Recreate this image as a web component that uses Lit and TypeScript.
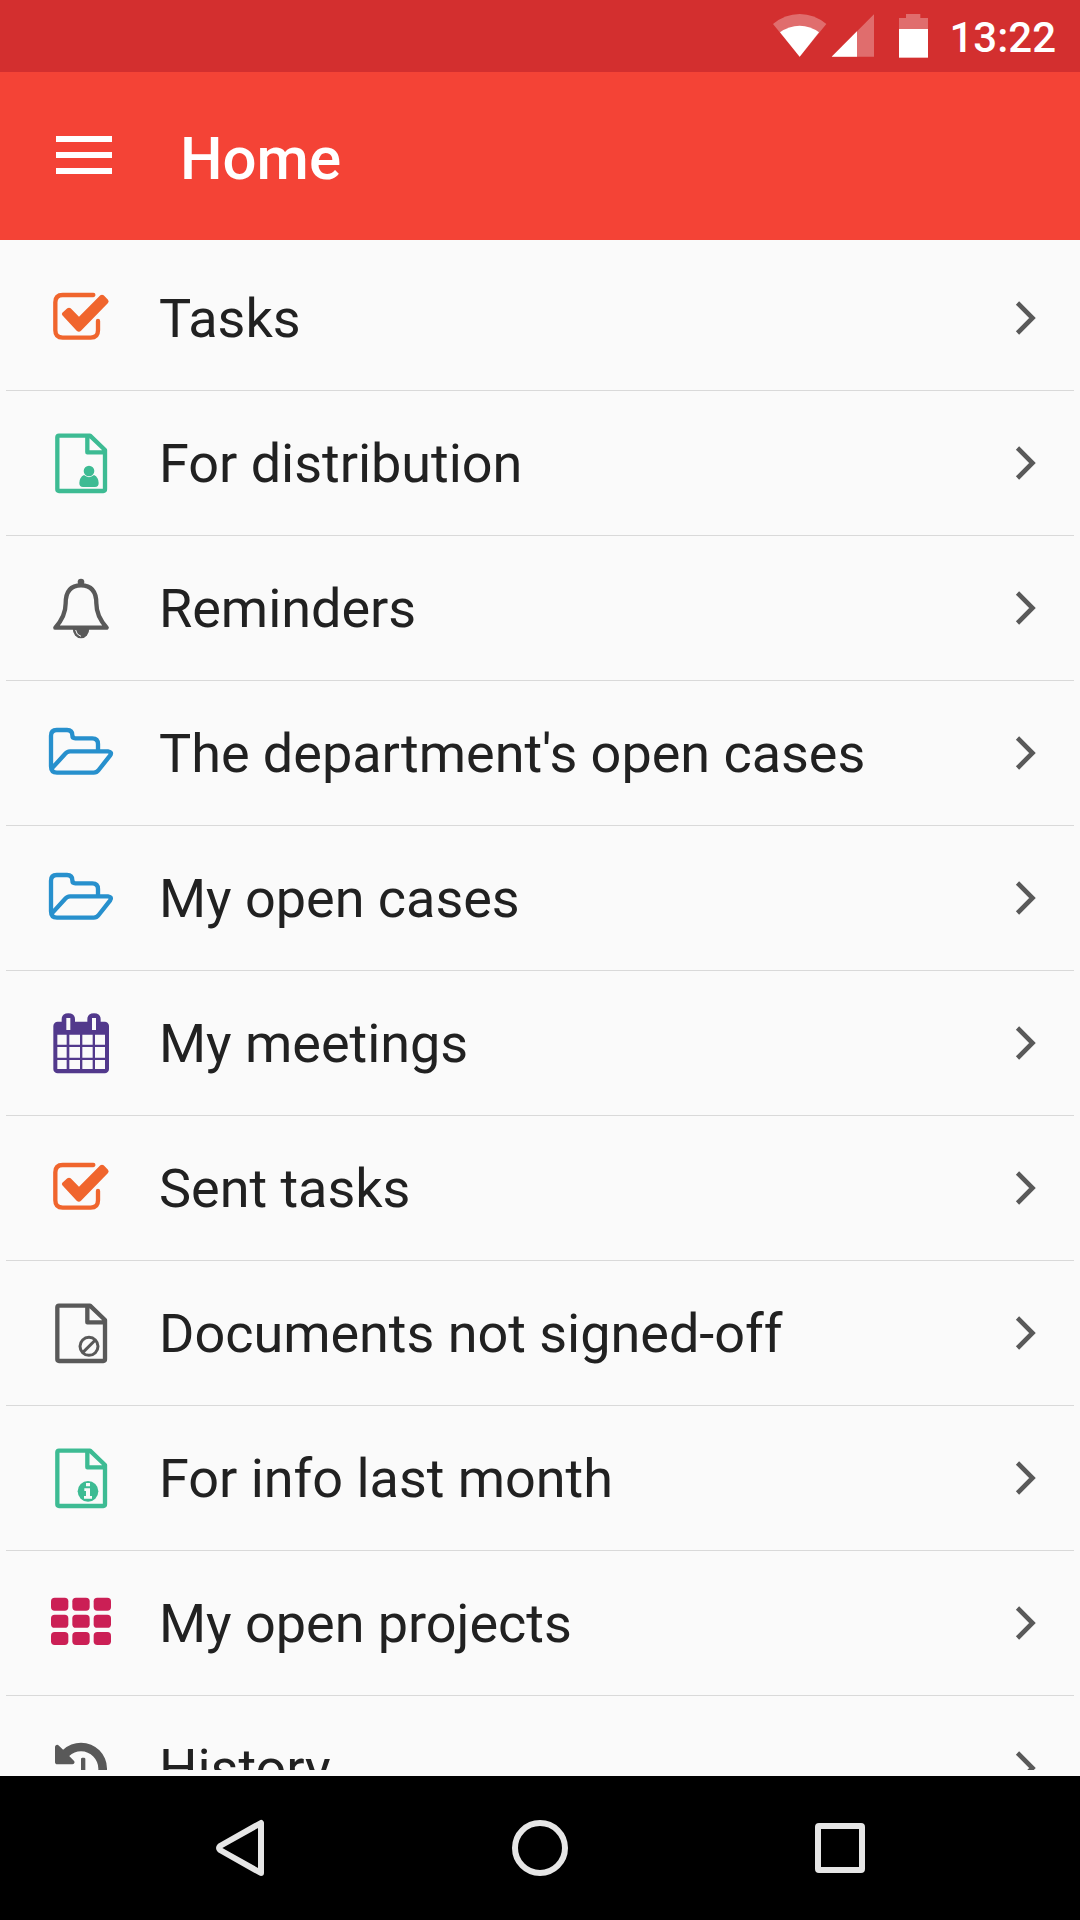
import { LitElement, html, svg, css } from "lit";
import { customElement, property } from "lit/decorators.js";

const ORANGE = "#f0652d";
const GREEN = "#3dbb93";
const GREY = "#595959";
const BLUE = "#2790cd";
const PURPLE = "#52398c";
const PINK = "#cb1f55";

const sheet = (color: string) => svg`
  <path d="M180 134H87q-5 0-5 5v156q0 5 5 5h133q5 0 5-5V177z M172 134v50h52"
    fill="none" stroke=${color} stroke-width="13" stroke-linejoin="round"/>`;

const check = svg`
  <path d="M190 147H98q-22 0-22 22v84q0 22 22 22h84q22 0 22-22v-28" fill="none"
    stroke=${ORANGE} stroke-width="13" stroke-linecap="round"/>
  <path d="M97 200q-3 4 0 8l43 46q7 6 13 0L234 171q4-5 0-10l-13-13q-5-4-10 0L147 212l-25-25q-5-4-10 0z"
    fill=${ORANGE}/>`;

const folder = svg`
  <g fill="none" stroke=${BLUE} stroke-width="13" stroke-linejoin="round">
    <path d="M204 208v-19q0-17-17-17h-51q-9 0-9-9 0-16-16-16H80q-17 0-17 17v92q0 19 18 19h110q9 0 15-8l34-43q8-11-6-13H120q-9 0-15 8L65 263"/>
  </g>`;

const icons: Record<string, unknown> = {
  check,
  folder,
  person: svg`${sheet(GREEN)}
    <circle cx="177" cy="240" r="16" fill=${GREEN}/>
    <path d="M162 252q15 13 30 0 14 7 14 24 0 12-11 12h-36q-11 0-11-12 0-17 14-24z" fill=${GREEN}/>`,
  bell: svg`
    <path d="M76 275q31-34 31-73 0-54 46-54t46 54q0 39 31 73z" fill="none" stroke=${GREY}
      stroke-width="13" stroke-linejoin="round"/>
    <circle cx="153" cy="138" r="10" fill=${GREY}/>
    <path d="M128 277a25 30 0 0 0 50 0z" fill=${GREY}/>
    <path d="M137 282q2 15 16 19" fill="none" stroke="#fafafa" stroke-width="3"/>`,
  calendar: svg`
    <rect x="70" y="152" width="167" height="155" rx="13" fill=${PURPLE}/>
    <path d="M95 160v-15q0-18 20-18t20 18v15zM172 160v-15q0-18 20-18t20 18v15z" fill=${PURPLE}/>
    <path d="M109 141h12v36h-12zM186 141h12v36h-12z" fill="#fafafa"/>
    <path d="M82 191h28v30H82zM118 191h32v30h-32zM157 191h31v30h-31zM195 191h30v30h-30z
      M82 228h28v32H82zM118 228h32v32h-32zM157 228h31v32h-31zM195 228h30v32h-30z
      M82 267h28v27H82zM118 267h32v27h-32zM157 267h31v27h-31zM195 267h30v27h-30z" fill="#fafafa"/>`,
  blocked: svg`${sheet(GREY)}
    <g fill="none" stroke=${GREY} stroke-width="9">
      <circle cx="177" cy="256" r="27"/><path d="M158 275l38-38"/>
    </g>`,
  info: svg`${sheet(GREEN)}
    <circle cx="174" cy="256" r="31" fill=${GREEN}/>
    <path d="M168 231h12v10h-12zM163 247h17v23h6v8h-24v-8h6v-15h-5z" fill="#fafafa"/>`,
  grid: svg`${[63, 127, 191].map((x) =>
    [140, 191.5, 243].map((y) => svg`<rect x=${x} y=${y} width="52" height="39" rx="11" fill=${PINK}/>`)
  )}`,
  history: svg`
    <path transform="translate(75 127) scale(.1016)" fill=${GREY}
      d="M1536 896q0 156-61 298t-164 245-245 164-298 61q-172 0-327-72.500t-264-204.500q-7-10-6.500-22.500t8.500-20.500l137-138q10-9 25-9 16 2 23 12 73 95 179 147t225 52q104 0 198.500-40.500t163.500-109.500 109.500-163.500 40.500-198.500-40.500-198.500-109.500-163.500-163.500-109.500-198.500-40.500q-98 0-188 35.500t-160 101.500l137 138q31 30 14 69-17 40-59 40h-448q-26 0-45-19t-19-45v-448q0-42 40-59 39-17 69 14l130 129q107-101 244.500-156.500t284.500-55.500q156 0 298 61t245 164 164 245 61 298zm-640-288v448q0 14-9 23t-23 9h-320q-14 0-23-9t-9-23v-64q0-14 9-23t23-9h224v-352q0-14 9-23t23-9h64q14 0 23 9t9 23z"/>`,
};

@customElement("menu-row")
class MenuRow extends LitElement {
  @property() icon = "";
  @property() label = "";

  static styles = css`
    :host {
      display: flex;
      align-items: center;
      flex: none;
      box-sizing: border-box;
      height: 145px;
      padding: 0 35px 0 24px;
      border-bottom: 1px solid #d9d9d9;
    }
    .icon { flex: none; width: 110px; height: 144px; }
    .label {
      flex: 1;
      padding: 2px 0 0 19px;
      font-size: 54px;
      line-height: 64px;
      letter-spacing: -0.03px;
      white-space: nowrap;
      color: #212121;
    }
    .chevron { flex: none; width: 26px; height: 40px; }
  `;

  render() {
    return html`
      <svg class="icon" viewBox="0 0 330 432">${icons[this.icon]}</svg>
      <span class="label">${this.label}</span>
      <svg class="chevron" viewBox="0 0 26 40">
        <path d="M4.500 5L19.500 20L4.500 35" fill="none" stroke=${GREY} stroke-width="4.600"/>
      </svg>
    `;
  }
}

const rows: [string, string][] = [
  ["check", "Tasks"],
  ["person", "For distribution"],
  ["bell", "Reminders"],
  ["folder", "The department's open cases"],
  ["folder", "My open cases"],
  ["calendar", "My meetings"],
  ["check", "Sent tasks"],
  ["blocked", "Documents not signed-off"],
  ["info", "For info last month"],
  ["grid", "My open projects"],
  ["history", "History"],
];

@customElement("app-root")
class AppRoot extends LitElement {
  static styles = css`
    :host {
      display: flex;
      flex-direction: column;
      width: 1080px;
      height: 1920px;
      overflow: hidden;
      background: #fafafa;
      font-family: Roboto, sans-serif;
    }
    .status {
      flex: none;
      display: flex;
      align-items: center;
      justify-content: flex-end;
      height: 72px;
      box-sizing: border-box;
      padding-right: 24px;
      background: #d32f2f;
      color: #fff;
    }
    .signals { width: 190px; height: 72px; margin-right: 19px; }
    .time { font-size: 42px; line-height: 48px; font-weight: 500; padding-top: 3px; }
    .bar {
      flex: none;
      display: flex;
      align-items: center;
      height: 168px;
      box-sizing: border-box;
      padding-left: 56px;
      background: #f44336;
      color: #fff;
    }
    .menu { width: 56px; height: 38px; margin-bottom: 2px; }
    .title { margin: 5px 0 0 68px; font-size: 60px; line-height: 70px; font-weight: 500; }
    .list {
      flex: 1;
      min-height: 0;
      display: flex;
      flex-direction: column;
      margin: 6px;
      overflow: hidden;
    }
    .nav {
      flex: none;
      display: flex;
      align-items: center;
      justify-content: center;
      gap: 240px;
      height: 144px;
      background: #000;
    }
    .key { width: 60px; height: 60px; fill: none; stroke: #e6e6e6; stroke-width: 6; stroke-linejoin: round; }
  `;

  render() {
    return html`
      <header class="status">
        <svg class="signals" viewBox="0 0 570 216" fill="#fff">
          <path d="M179 170L99 72Q135 42 179 42T259 72z" opacity=".3"/>
          <path d="M179 170L120 97Q147 77 179 77T237 97z"/>
          <path d="M275 170L402 43V170z" opacity=".3"/>
          <path d="M275 170L351 94V170z"/>
          <path d="M477 87V54h21V42h43v12h23v33z" opacity=".3"/>
          <path d="M477 87h87v86h-87z"/>
        </svg>
        <span class="time">13:22</span>
      </header>
      <div class="bar">
        <svg class="menu" viewBox="0 0 56 38" fill="#fff">
          <path d="M0 0h56v6H0zM0 16h56v6H0zM0 32h56v6H0z"/>
        </svg>
        <span class="title">Home</span>
      </div>
      <main class="list">
        ${rows.map(([icon, label]) => html`<menu-row .icon=${icon} .label=${label}></menu-row>`)}
      </main>
      <nav class="nav">
        <svg class="key" viewBox="0 0 60 60"><path d="M51 5V55L10 32Q8 30 10 28z"/></svg>
        <svg class="key" viewBox="0 0 60 60"><circle cx="30" cy="30" r="25"/></svg>
        <svg class="key" viewBox="0 0 60 60"><rect x="8" y="8" width="44" height="44" rx="1"/></svg>
      </nav>
    `;
  }
}
